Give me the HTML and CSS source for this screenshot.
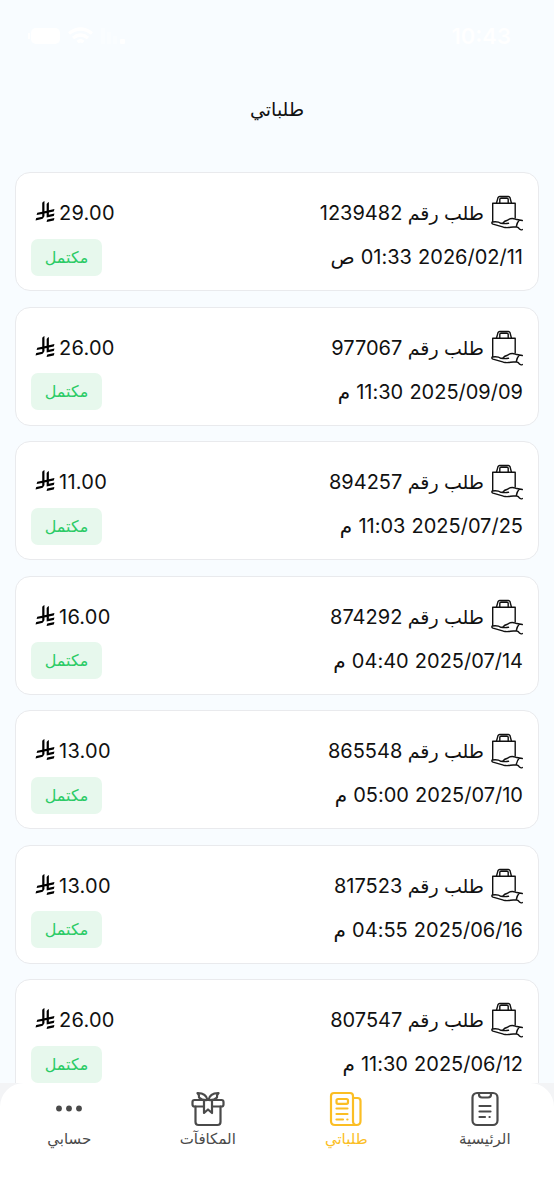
FILE: index.html
```
<!DOCTYPE html>
<html lang="ar" dir="rtl">

<head>
    <meta charset="UTF-8">
    <meta name="viewport" content="width=device-width, initial-scale=1.0">
    <title>طلباتي</title>
    <link rel="stylesheet" href="styles.css">
</head>

<body>

    <!-- shared icons -->
    <svg class="sprite" width="0" height="0">
        <symbol id="bag" viewBox="0 0 32 36">
            <g fill="none" stroke="#111" stroke-width="1.4" stroke-linejoin="round" stroke-linecap="round">
                <path d="M1.700 26.500V8.300H24.200V23" />
                <path d="M5.500 8L7 2.600Q7.500 1.500 8.700 1.500H17.300Q18.500 1.500 19 2.600L20.400 8M8.800 8V4.300Q8.800 3.200 10 3.200H16Q17.200 3.200 17.200 4.300V8" />
                <path d="M17.500 28.300Q14 29 10 28.300C7.500 26.600 4.500 26.500 1.200 27C.5 28 .9 28.700 2 29.200L12.500 32.200Q16 33 19.500 32.200L25.300 31.700M12 28Q13.500 25.800 16.500 25.200C19 23.400 22 23.200 24.500 24.200L31.300 25.500M28.300 25Q25.800 27.800 25.300 31.700Q27.500 32.200 28.800 34.300Q30 35.200 31.300 34.600" />
            </g>
        </symbol>
        <symbol id="riyal" viewBox="0 0 1124.14 1256.39">
            <path d="M699.62 1113.020c-20.060 44.480-33.320 92.750-38.400 143.370l424.510-90.240c20.060-44.470 33.310-92.750 38.400-143.370l-424.510 90.240Z" />
            <path d="M1085.730 895.800c20.060-44.470 33.320-92.750 38.400-143.370l-330.680 70.330v-135.200l292.270-62.110c20.060-44.470 33.320-92.750 38.400-143.370l-330.680 70.270V66.130c-50.670 28.450-95.670 66.320-132.250 110.990v403.350l-132.250 28.110V0c-50.670 28.440-95.670 66.320-132.250 110.990v525.690l-295.910 62.880c-20.060 44.470-33.330 92.750-38.420 143.370l334.330-71.050v170.260l-358.300 76.140c-20.060 44.470-33.320 92.750-38.400 143.370l375.040-79.700c30.530-6.350 56.770-24.400 73.830-49.240l68.780-101.970c7.140-10.550 11.300-23.270 11.300-36.970v-149.980l132.250-28.110v270.400l424.530-90.280Z" />
        </symbol>
    </svg>

    <div class="status-bar">
        <span class="clock">10:43</span>
        <div class="signals">
            <svg width="26" height="18" viewBox="0 0 26 18" fill="#fff"><rect x="20" y="12" width="5" height="5" rx="1" /><path d="M13 9h4v8h-4zM7 5h4v12h-4zM1 1h4v16h-4z" opacity=".35" /></svg>
            <svg width="27" height="19" viewBox="0 0 27 19"><path d="M2 6.500Q13.500-2.500 25 6.500M6 11Q13.500 5 21 11M10.500 15Q13.500 12.500 16.500 15" fill="none" stroke="#fff" stroke-width="3.200" /></svg>
            <svg width="33" height="18" viewBox="0 0 33 18"><rect x="3" y="1" width="29" height="16" rx="5" fill="#fff" /><path d="M1 6v6" stroke="#fff" stroke-width="2" /></svg>
        </div>
    </div>

    <h1 class="title">طلباتي</h1>

    <div class="orders">

        <div class="card">
            <div class="row">
                <div class="order"><svg class="bag"><use href="#bag" /></svg><span>طلب رقم <b>1239482</b></span></div>
                <div class="price"><b>29.00</b><svg class="riyal"><use href="#riyal" /></svg></div>
            </div>
            <div class="row">
                <div class="date">2026/02/11 01:33 ص</div>
                <div class="state">مكتمل</div>
            </div>
        </div>

        <div class="card">
            <div class="row">
                <div class="order"><svg class="bag"><use href="#bag" /></svg><span>طلب رقم <b>977067</b></span></div>
                <div class="price"><b>26.00</b><svg class="riyal"><use href="#riyal" /></svg></div>
            </div>
            <div class="row">
                <div class="date">2025/09/09 11:30 م</div>
                <div class="state">مكتمل</div>
            </div>
        </div>

        <div class="card">
            <div class="row">
                <div class="order"><svg class="bag"><use href="#bag" /></svg><span>طلب رقم <b>894257</b></span></div>
                <div class="price"><b>11.00</b><svg class="riyal"><use href="#riyal" /></svg></div>
            </div>
            <div class="row">
                <div class="date">2025/07/25 11:03 م</div>
                <div class="state">مكتمل</div>
            </div>
        </div>

        <div class="card">
            <div class="row">
                <div class="order"><svg class="bag"><use href="#bag" /></svg><span>طلب رقم <b>874292</b></span></div>
                <div class="price"><b>16.00</b><svg class="riyal"><use href="#riyal" /></svg></div>
            </div>
            <div class="row">
                <div class="date">2025/07/14 04:40 م</div>
                <div class="state">مكتمل</div>
            </div>
        </div>

        <div class="card">
            <div class="row">
                <div class="order"><svg class="bag"><use href="#bag" /></svg><span>طلب رقم <b>865548</b></span></div>
                <div class="price"><b>13.00</b><svg class="riyal"><use href="#riyal" /></svg></div>
            </div>
            <div class="row">
                <div class="date">2025/07/10 05:00 م</div>
                <div class="state">مكتمل</div>
            </div>
        </div>

        <div class="card">
            <div class="row">
                <div class="order"><svg class="bag"><use href="#bag" /></svg><span>طلب رقم <b>817523</b></span></div>
                <div class="price"><b>13.00</b><svg class="riyal"><use href="#riyal" /></svg></div>
            </div>
            <div class="row">
                <div class="date">2025/06/16 04:55 م</div>
                <div class="state">مكتمل</div>
            </div>
        </div>

        <div class="card">
            <div class="row">
                <div class="order"><svg class="bag"><use href="#bag" /></svg><span>طلب رقم <b>807547</b></span></div>
                <div class="price"><b>26.00</b><svg class="riyal"><use href="#riyal" /></svg></div>
            </div>
            <div class="row">
                <div class="date">2025/06/12 11:30 م</div>
                <div class="state">مكتمل</div>
            </div>
        </div>

    </div>

    <div class="tabs-wrap">
        <div class="tabs">
            <a class="tab" href="#">
                <svg width="34" height="36" viewBox="0 0 34 36" fill="none" stroke="#4a4a4a" stroke-width="2.200" stroke-linecap="round" stroke-linejoin="round">
                    <rect x="4.500" y="2" width="25" height="32" rx="4.500" />
                    <path d="M11 2V3.500Q11 6.500 14 6.500H20Q23 6.500 23 3.500V2M11.500 15H22.500M11.500 20.500H22.500M11.500 26H17M21.500 26H21.700" />
                </svg>
                <span>الرئيسية</span>
            </a>
            <a class="tab active" href="#">
                <svg width="34" height="36" viewBox="0 0 34 36" fill="none" stroke="#fbbe24" stroke-width="2.200" stroke-linecap="round" stroke-linejoin="round">
                    <path d="M24 30V5Q24 2 21 2H5Q2 2 2 5V30Q2 34 6 34H27.500Q31.500 34 31.500 30V10Q31.500 7 28.500 7H24M24 30Q24 34 27.500 34" />
                    <rect x="7.500" y="8" width="11.500" height="4.800" rx="1.500" />
                    <path d="M7.500 17.500H18.500M7.500 23H18.500M7.500 28.500H14M18.300 28.500H18.500" />
                </svg>
                <span>طلباتي</span>
            </a>
            <a class="tab" href="#">
                <svg width="34" height="36" viewBox="0 0 34 36" fill="none" stroke="#4a4a4a" stroke-width="2.200" stroke-linecap="round" stroke-linejoin="round">
                    <path d="M4.500 15.500V31Q4.500 34 7.500 34H26.500Q29.500 34 29.500 31V15.500" />
                    <rect x="1.500" y="9" width="31" height="6.500" rx="2" />
                    <path d="M13 9V22L17 18.500L21 22V9" fill="#fff" />
                    <path d="M16.500 9Q15 2 6.500 2.200Q8.500 4 8 6.500Q11 9.500 16.500 9ZM17.500 9Q19 2 27.500 2.200Q25.500 4 26 6.500Q23 9.500 17.500 9Z" fill="#fff" />
                </svg>
                <span>المكافآت</span>
            </a>
            <a class="tab" href="#">
                <svg width="34" height="36" viewBox="0 0 34 36" fill="#4a4a4a">
                    <circle cx="7" cy="17.500" r="2.900" />
                    <circle cx="17" cy="17.500" r="2.900" />
                    <circle cx="27" cy="17.500" r="2.900" />
                </svg>
                <span>حسابي</span>
            </a>
        </div>
    </div>

</body>

</html>
```
FILE: styles.css
```
* {
    box-sizing: border-box;
}

body {
    margin: 0;
    height: 1199px;
    display: flex;
    flex-direction: column;
    overflow: hidden;
    background: #f8fcff;
    color: #111;
    font-family: Inter, "DejaVu Sans", sans-serif;
}

b {
    font-weight: normal;
    font-size: 20px;
    letter-spacing: 0.25px;
}

.sprite {
    position: absolute;
}

.status-bar {
    height: 72px;
    padding: 0 43px 0 28px;
    display: flex;
    align-items: center;
    justify-content: space-between;
    flex: none;
}

.clock {
    color: #fff;
    font-size: 22px;
    font-weight: 600;
}

.signals {
    display: flex;
    align-items: center;
    gap: 6px;
}

.title {
    margin: 0;
    height: 76px;
    line-height: 76px;
    text-align: center;
    font-size: 19px;
    font-weight: normal;
    flex: none;
}

.orders {
    flex: 1;
    min-height: 0;
    overflow: hidden;
    padding: 24px 15px 0;
    display: flex;
    flex-direction: column;
    gap: 15.5px;
}

.card {
    flex: none;
    height: 119px;
    padding: 18px 15px 0;
    background: #fff;
    border: 1px solid #e9eaed;
    border-radius: 15px;
}

.row {
    display: flex;
    align-items: center;
    justify-content: space-between;
    height: 44px;
}

.order {
    display: flex;
    align-items: center;
    gap: 7px;
    font-size: 19px;
}

.bag {
    width: 32px;
    height: 36px;
}

.price {
    display: flex;
    align-items: center;
    gap: 4px;
    padding-left: 4px;
    font-size: 20px;
}

.riyal {
    width: 20px;
    height: 21px;
    margin-bottom: 3px;
}

.date {
    font-size: 20px;
    letter-spacing: 0.1px;
    word-spacing: 0.5px;
}

.state {
    width: 71px;
    height: 37px;
    line-height: 36px;
    text-align: center;
    border-radius: 7px;
    background: #e7f8ed;
    color: #2bcb66;
    font-size: 16px;
}

.tabs-wrap {
    flex: none;
    height: 116px;
    background: #f3f4f6;
}

.tabs {
    height: 100%;
    display: flex;
    background: #fff;
    border-radius: 24px 24px 0 0;
    padding-top: 8px;
}

.tab {
    flex: 1;
    display: flex;
    flex-direction: column;
    align-items: center;
    color: #4a4a4a;
    font-size: 15px;
    text-decoration: none;
}

.tab span {
    line-height: 24px;
}

.active {
    color: #fbbe24;
}
```
